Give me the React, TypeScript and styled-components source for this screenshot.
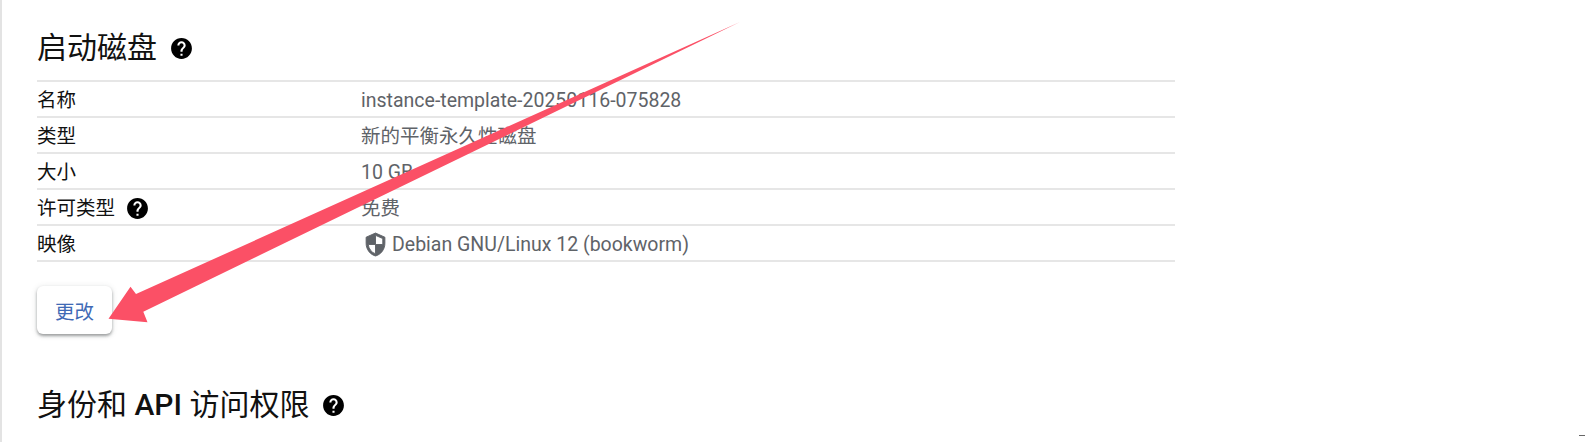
import React from "react";
import styled, { createGlobalStyle } from "styled-components";

const Global = createGlobalStyle`
  html, body { margin: 0; padding: 0; background: #fff; }
  body { font-family: Roboto, "Noto Sans CJK SC", sans-serif; overflow: hidden; }
`;

const Page = styled.div`
  position: relative;
  width: 1590px;
  height: 442px;
  box-sizing: border-box;
  border-left: 2px solid #e3e3e3;
  padding: 30px 0 0 35px;
  overflow: hidden;
`;

const Heading = styled.h2<{ $top?: number }>`
  display: flex;
  align-items: center;
  gap: 12px;
  margin: ${(p) => p.$top ?? 0}px 0 0;
  height: 36px;
  font-size: 30px;
  line-height: 36px;
  font-weight: 400;
  color: #111;
`;

const Strong = styled.span`
  font-weight: 500;
`;

const Table = styled.div`
  width: 1138px;
  margin-top: 14px;
  border-top: 2px solid #e6e6e6;
`;

const Row = styled.div`
  display: grid;
  grid-template-columns: 324px 1fr;
  align-items: center;
  height: 36px;
  box-sizing: border-box;
  padding-top: 3px;
  border-bottom: 2px solid #e6e6e6;
  font-size: 19.5px;
  line-height: 24px;
`;

const Label = styled.div`
  display: flex;
  align-items: center;
  gap: 10px;
  color: #111;
`;

const Value = styled.div`
  display: flex;
  align-items: center;
  gap: 4px;
  color: #5f6368;
`;

const ShieldSlot = styled.span`
  display: flex;
  margin-left: 2px;
`;

const ChangeButton = styled.button`
  display: block;
  width: 75px;
  height: 48px;
  margin-top: 24px;
  border: 0;
  border-radius: 6px;
  background: #fff;
  color: #3f6ab5;
  font: 400 19.5px Roboto, "Noto Sans CJK SC", sans-serif;
  box-shadow: 0 2px 3px rgba(60, 64, 67, 0.45), 0 1px 6px rgba(60, 64, 67, 0.15);
  padding: 0;
`;

const Overlay = styled.svg`
  position: absolute;
  left: -2px;
  top: 0;
  pointer-events: none;
`;

const CornerMark = styled.span`
  position: absolute;
  right: 5px;
  bottom: 6px;
  width: 6px;
  height: 1px;
  background: #666;
`;

const Help = ({ size }: { size: number }) => (
  <svg width={size} height={size} viewBox="0 0 24 24" fill="#000" aria-hidden="true">
    <path d="M12 2C6.48 2 2 6.48 2 12s4.48 10 10 10 10-4.48 10-10S17.52 2 12 2zm1 17h-2v-2h2v2zm2.07-7.75l-.9.92C13.45 12.9 13 13.5 13 15h-2v-.5c0-1.1.45-2.1 1.17-2.83l1.24-1.26c.37-.36.59-.86.59-1.41 0-1.1-.9-2-2-2s-2 .9-2 2H8c0-2.21 1.79-4 4-4s4 1.79 4 4c0 .88-.36 1.68-.93 2.25z" />
  </svg>
);

const Shield = () => (
  <svg width="25" height="25" viewBox="0 0 24 24" fill="#5f6368" stroke="#5f6368" strokeWidth="0.9" aria-hidden="true">
    <g transform="matrix(-1 0 0 1 24 0)">
      <path d="M12 1L3 5v6c0 5.55 3.84 10.74 9 12 5.16-1.26 9-6.45 9-12V5l-9-4zm0 10.99h7c-.53 4.12-3.28 7.79-7 8.94V12H5V6.3l7-3.11v8.8z" />
    </g>
  </svg>
);

export default function App() {
  return (
    <Page>
      <Global />
      <Heading>
        启动磁盘
        <Help size={25} />
      </Heading>
      <Table>
        <Row>
          <Label>名称</Label>
          <Value>instance-template-20250116-075828</Value>
        </Row>
        <Row>
          <Label>类型</Label>
          <Value>新的平衡永久性磁盘</Value>
        </Row>
        <Row>
          <Label>大小</Label>
          <Value>10 GB</Value>
        </Row>
        <Row>
          <Label>
            许可类型
            <Help size={25} />
          </Label>
          <Value>免费</Value>
        </Row>
        <Row>
          <Label>映像</Label>
          <Value>
            <ShieldSlot>
              <Shield />
            </ShieldSlot>
            Debian GNU/Linux 12 (bookworm)
          </Value>
        </Row>
      </Table>
      <ChangeButton>更改</ChangeButton>
      <Heading $top={53}>
        <span>
          身份和 <Strong>API</Strong> 访问权限
        </span>
        <Help size={25} />
      </Heading>
      <Overlay width="1590" height="442" viewBox="0 0 1590 442">
        <polygon
          points="740,22 136,294 130.5,286.7 108.5,318.7 147.5,322.3 143.3,311.7"
          fill="#fb5066"
        />
      </Overlay>
      <CornerMark />
    </Page>
  );
}
